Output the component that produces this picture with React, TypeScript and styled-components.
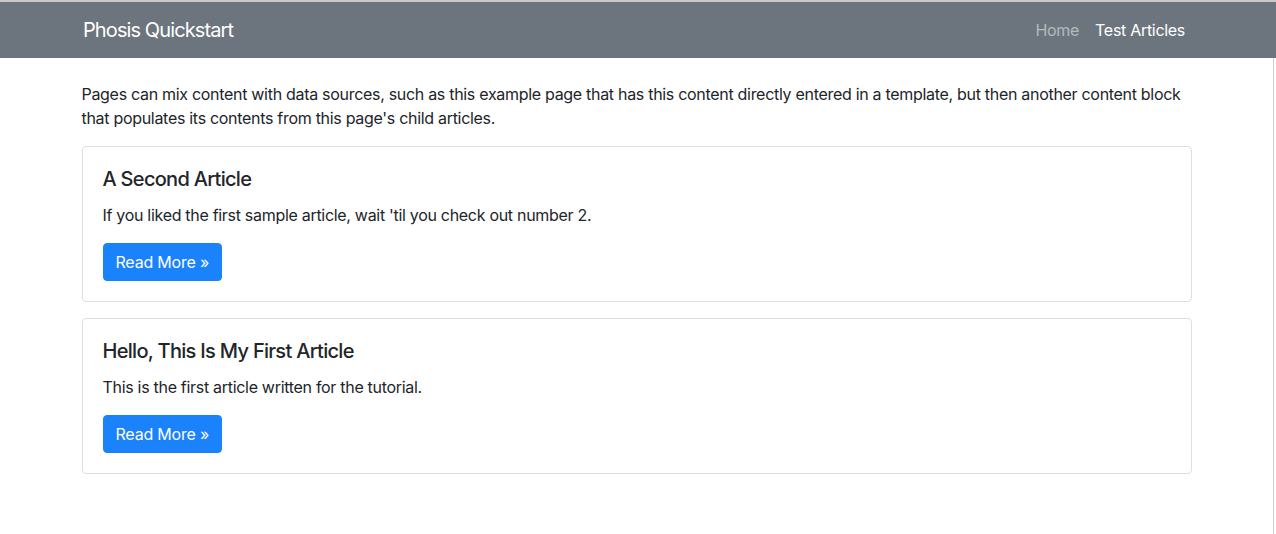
import styled, { createGlobalStyle } from 'styled-components';

const GlobalStyle = createGlobalStyle`
  html, body {
    margin: 0;
    padding: 0;
    background: #fff;
  }
  body {
    font-family: Inter, "Noto Sans", "Liberation Sans", sans-serif;
    font-size: 16px;
    line-height: 1.5;
    letter-spacing: -0.3px;
    color: #212529;
    border-top: 2px solid #c9c9c9;
  }
`;

const Navbar = styled.nav`
  background: #6c757d;
  height: 56px;
`;

const Container = styled.div`
  max-width: 1110px;
  margin: 0 auto;
  padding: 0 15px;
  height: 100%;
`;

const NavInner = styled(Container)`
  display: flex;
  align-items: center;
  justify-content: space-between;
`;

const Brand = styled.a`
  color: #fff;
  font-size: 20px;
  line-height: 30px;
  letter-spacing: -0.9px;
  text-decoration: none;
`;

const NavLinks = styled.ul`
  display: flex;
  list-style: none;
  margin: 0;
  padding: 0;
`;

const NavLink = styled.a<{ $active?: boolean }>`
  display: block;
  padding: 8px;
  color: ${({ $active }) => ($active ? '#fff' : 'rgba(255, 255, 255, 0.5)')};
  text-decoration: none;
`;

const Page = styled.main`
  width: calc(100% - 2px);
  min-height: 476px;
  border-right: 1px solid #cfcfcf;
  padding-top: 24px;
  box-sizing: border-box;
`;

const Intro = styled.p`
  margin: 0 0 16px;
`;

const Card = styled.article`
  border: 1px solid rgba(0, 0, 0, 0.125);
  border-radius: 4px;
  padding: 20px;
  margin-bottom: 16px;
`;

const CardTitle = styled.h5`
  font-size: 20px;
  font-weight: 500;
  line-height: 1.2;
  letter-spacing: -0.7px;
  margin: 0 0 12px;
`;

const CardText = styled.p`
  margin: 0 0 16px;
`;

const Button = styled.a`
  display: inline-block;
  background: #1a82fb;
  color: #fff;
  border: 1px solid #1a82fb;
  border-radius: 4px;
  padding: 6px 12px;
  line-height: 24px;
  letter-spacing: -0.2px;
  text-decoration: none;
`;

const articles = [
  {
    title: 'A Second Article',
    text: "If you liked the first sample article, wait 'til you check out number 2.",
  },
  {
    title: 'Hello, This Is My First Article',
    text: 'This is the first article written for the tutorial.',
  },
];

export default function App() {
  return (
    <>
      <GlobalStyle />
      <Navbar>
        <NavInner>
          <Brand href="#">Phosis Quickstart</Brand>
          <NavLinks>
            <li>
              <NavLink href="#">Home</NavLink>
            </li>
            <li>
              <NavLink href="#" $active>
                Test Articles
              </NavLink>
            </li>
          </NavLinks>
        </NavInner>
      </Navbar>
      <Page>
        <Container>
          <Intro>
            Pages can mix content with data sources, such as this example page that has this content
            directly entered in a template, but then another content block that populates its
            contents from this page's child articles.
          </Intro>
          {articles.map((a) => (
            <Card key={a.title}>
              <CardTitle>{a.title}</CardTitle>
              <CardText>{a.text}</CardText>
              <Button href="#">Read More »</Button>
            </Card>
          ))}
        </Container>
      </Page>
    </>
  );
}
